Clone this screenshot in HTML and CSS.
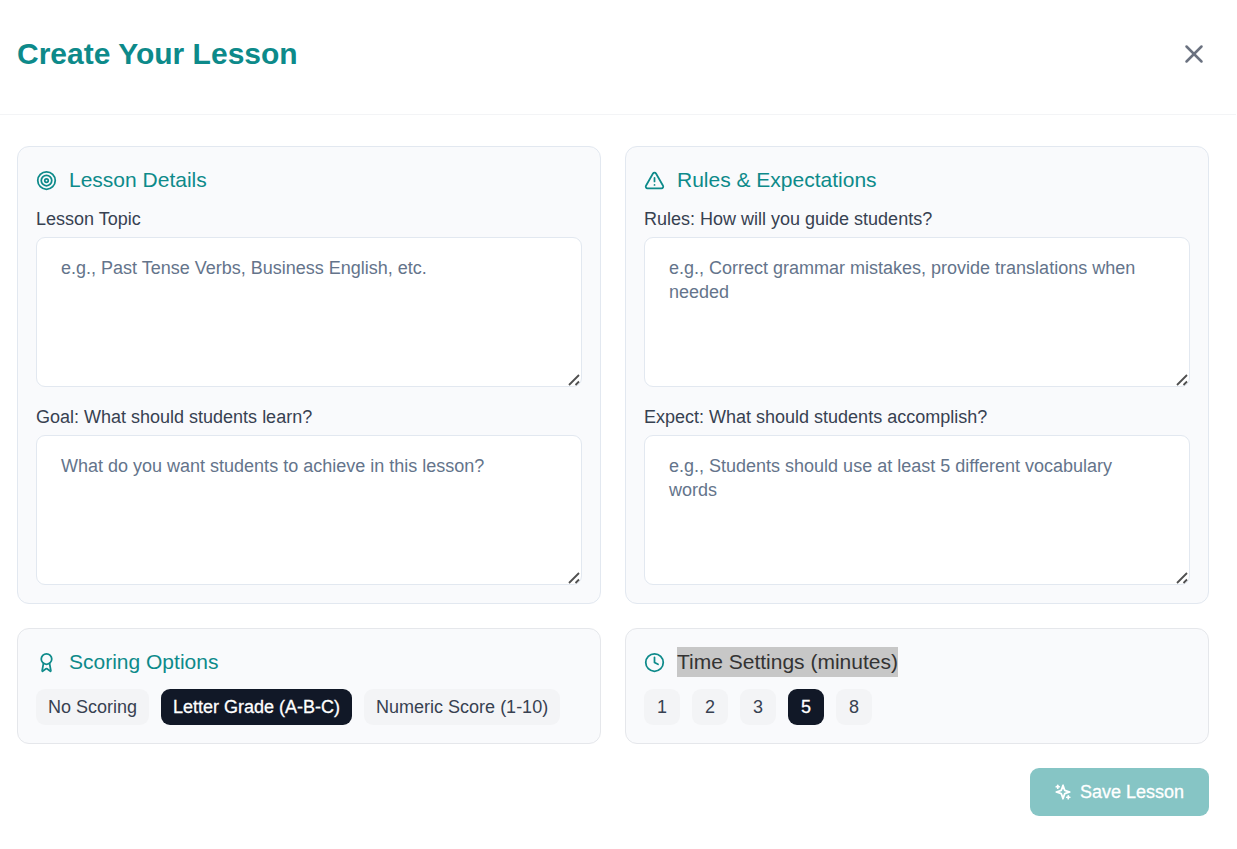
FILE: index.html
```html
<!DOCTYPE html>
<html lang="en">
<head>
<meta charset="utf-8">
<title>Create Your Lesson</title>
<link rel="stylesheet" href="styles.css">
</head>
<body>
<header class="header">
  <h1 class="title">Create Your Lesson</h1>
  <button class="close" aria-label="Close">
    <svg class="close-icon" viewBox="0 0 24 24"><path d="M18 6 6 18"/><path d="m6 6 12 12"/></svg>
  </button>
</header>
<main class="content">
  <div class="grid">
    <section class="card">
      <h2 class="card-title">
        <svg class="icon" viewBox="0 0 24 24"><circle cx="12" cy="12" r="10"/><circle cx="12" cy="12" r="6"/><circle cx="12" cy="12" r="2"/></svg>
        <span>Lesson Details</span>
      </h2>
      <div class="fields">
        <label class="field">Lesson Topic
          <span class="input-wrap"><textarea class="input" placeholder="e.g., Past Tense Verbs, Business English, etc."></textarea><svg class="grip" viewBox="0 0 12 12"><path d="M1 11 11 1M7.5 11 11 7.5"/></svg></span>
        </label>
        <label class="field">Goal: What should students learn?
          <span class="input-wrap"><textarea class="input" placeholder="What do you want students to achieve in this lesson?"></textarea><svg class="grip" viewBox="0 0 12 12"><path d="M1 11 11 1M7.5 11 11 7.5"/></svg></span>
        </label>
      </div>
    </section>
    <section class="card">
      <h2 class="card-title">
        <svg class="icon" viewBox="0 0 24 24"><path d="m21.73 18-8-14a2 2 0 0 0-3.48 0l-8 14A2 2 0 0 0 4 21h16a2 2 0 0 0 1.73-3Z"/><path d="M12 9v4"/><path d="M12 17h.01"/></svg>
        <span>Rules &amp; Expectations</span>
      </h2>
      <div class="fields">
        <label class="field">Rules: How will you guide students?
          <span class="input-wrap"><textarea class="input" placeholder="e.g., Correct grammar mistakes, provide translations when needed"></textarea><svg class="grip" viewBox="0 0 12 12"><path d="M1 11 11 1M7.5 11 11 7.5"/></svg></span>
        </label>
        <label class="field">Expect: What should students accomplish?
          <span class="input-wrap"><textarea class="input" placeholder="e.g., Students should use at least 5 different vocabulary words"></textarea><svg class="grip" viewBox="0 0 12 12"><path d="M1 11 11 1M7.5 11 11 7.5"/></svg></span>
        </label>
      </div>
    </section>
    <section class="card card-options">
      <h2 class="card-title">
        <svg class="icon" viewBox="0 0 24 24"><path d="m15.477 12.89 1.515 8.526a.5.5 0 0 1-.81.47l-3.58-2.687a1 1 0 0 0-1.197 0l-3.586 2.686a.5.5 0 0 1-.81-.469l1.514-8.526"/><circle cx="12" cy="8" r="6"/></svg>
        <span>Scoring Options</span>
      </h2>
      <div class="options">
        <button class="option">No Scoring</button>
        <button class="option selected">Letter Grade (A-B-C)</button>
        <button class="option">Numeric Score (1-10)</button>
      </div>
    </section>
    <section class="card card-options">
      <h2 class="card-title">
        <svg class="icon" viewBox="0 0 24 24"><circle cx="12" cy="12" r="10"/><path d="M12 6v6l4 2"/></svg>
        <span class="highlight">Time Settings (minutes)</span>
      </h2>
      <div class="options">
        <button class="option minutes">1</button>
        <button class="option minutes">2</button>
        <button class="option minutes">3</button>
        <button class="option minutes selected">5</button>
        <button class="option minutes">8</button>
      </div>
    </section>
  </div>
  <div class="actions">
    <button class="save">
      <svg class="save-icon" viewBox="0 0 24 24"><path d="m12 3-1.912 5.813a2 2 0 0 1-1.275 1.275L3 12l5.813 1.912a2 2 0 0 1 1.275 1.275L12 21l1.912-5.813a2 2 0 0 1 1.275-1.275L21 12l-5.813-1.912a2 2 0 0 1-1.275-1.275L12 3Z"/><path d="M5 3v4"/><path d="M19 17v4"/><path d="M3 5h4"/><path d="M17 19h4"/></svg>
      <span>Save Lesson</span>
    </button>
  </div>
</main>
</body>
</html>
```
FILE: styles.css
```css
* {
  box-sizing: border-box;
}

body {
  margin: 0;
  background: #fff;
  color: #374151;
  font: 18px/24px "Liberation Sans", Arial, sans-serif;
}

button {
  font: inherit;
  border: 0;
  padding: 0;
}

svg {
  fill: none;
  stroke: currentColor;
  stroke-width: 2;
  stroke-linecap: round;
  stroke-linejoin: round;
  flex: none;
}

.header {
  display: flex;
  align-items: flex-start;
  justify-content: space-between;
  width: 1236px;
  height: 115px;
  padding: 36px 27px 0 17px;
  border-bottom: 1px solid #f3f4f6;
}

.title {
  margin: 0;
  font-size: 30px;
  line-height: 36px;
  color: #0d8a8a;
}

.close {
  display: flex;
  background: none;
  color: #6b7280;
  padding: 3px 0;
}

.close-icon {
  width: 30px;
  height: 30px;
}

.content {
  width: 1209px;
  padding: 31px 0 0 17px;
}

.grid {
  display: grid;
  grid-template-columns: 1fr 1fr;
  gap: 24px;
}

.card {
  padding: 18px;
  border: 1px solid #e2e8f0;
  border-radius: 12px;
  background: #f9fafc;
}

.card-options {
  border-color: #e5e7eb;
}

.card-title {
  display: flex;
  align-items: center;
  gap: 12px;
  margin: 0 0 12px;
  font-size: 21px;
  line-height: 30px;
  font-weight: 400;
  color: #0d8a8a;
}

.icon {
  width: 21px;
  height: 21px;
}

.highlight {
  background: #c7c7c7;
  color: #333;
}

.fields {
  display: flex;
  flex-direction: column;
  gap: 18px;
}

.field {
  display: flex;
  flex-direction: column;
  gap: 6px;
}

.input-wrap {
  position: relative;
  display: block;
}

.input {
  display: block;
  width: 100%;
  height: 150px;
  padding: 18px 30px 18px 24px;
  border: 1px solid #e2e8f0;
  border-radius: 9px;
  background: #fff;
  font: inherit;
  resize: none;
}

.input::placeholder {
  color: #64748b;
}

.grip {
  position: absolute;
  right: 2.5px;
  bottom: 1.5px;
  width: 12px;
  height: 12px;
  color: #505050;
  stroke-width: 1.8;
  stroke-linecap: butt;
}

.options {
  display: flex;
  gap: 12px;
}

.option {
  height: 36px;
  padding: 0 12px;
  border-radius: 9px;
  background: #f3f4f6;
  color: #374151;
}

.minutes {
  width: 36px;
}

.selected {
  background: #111827;
  color: #fff;
  -webkit-text-stroke: 0.3px #fff;
}

.actions {
  display: flex;
  justify-content: flex-end;
  margin-top: 24px;
}

.save {
  display: flex;
  align-items: center;
  gap: 8px;
  height: 48px;
  padding: 0 25px 0 24px;
  border-radius: 9px;
  background: #86c5c5;
  color: #fff;
  -webkit-text-stroke: 0.3px #fff;
}

.save-icon {
  width: 18px;
  height: 18px;
  stroke-width: 2.3;
}
```
